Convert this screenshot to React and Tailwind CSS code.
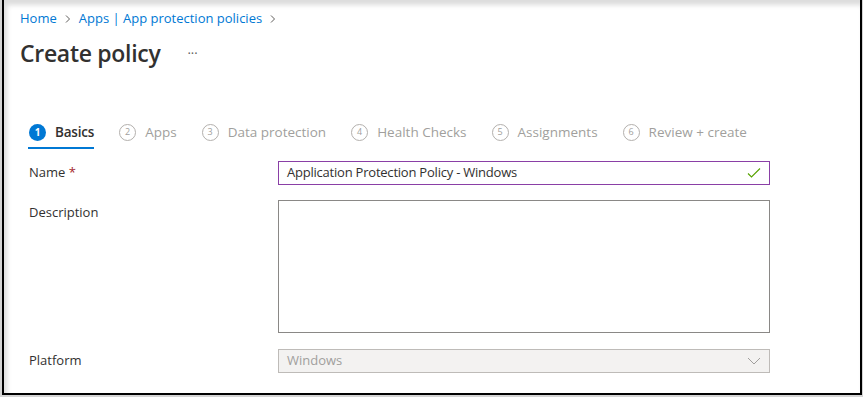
import React from 'react';

const font = { fontFamily: '"Open Sans", "Noto Sans", sans-serif' };

const steps = [
  { n: 1, label: 'Basics' },
  { n: 2, label: 'Apps' },
  { n: 3, label: 'Data protection' },
  { n: 4, label: 'Health Checks' },
  { n: 5, label: 'Assignments' },
  { n: 6, label: 'Review + create' },
];

const Chevron = () => (
  <svg width="8" height="10" viewBox="0 0 8 10" className="mx-[7px]">
    <path d="M2 1.5 L5.5 5 L2 8.5" fill="none" stroke="#605e5c" strokeWidth="1" />
  </svg>
);

const Step = ({ n, label, active }) => (
  <div className="flex flex-col">
    <div className="flex items-center h-[30px]">
      {active ? (
        <div className="w-[17px] h-[17px] rounded-full bg-[#0078d4] text-white text-[10px] font-bold flex items-center justify-center">
          {n}
        </div>
      ) : (
        <div className="w-[17px] h-[17px] rounded-full border border-[#b3b0ad] text-[#a19f9d] text-[9px] flex items-center justify-center">
          {n}
        </div>
      )}
      <span
        className={
          active
            ? 'ml-[9px] text-[13.5px] tracking-[-0.2px] font-semibold text-[#323130]'
            : 'ml-[9px] text-[13.5px] text-[#a19f9d]'
        }
      >
        {label}
      </span>
    </div>
    <div className={active ? 'h-[2px] bg-[#0078d4] -ml-[1px]' : 'h-[2px]'} />
  </div>
);

const App = () => {
  return (
    <div className="w-[863px] h-[397px] bg-[#d4d4d4] pl-[2px] pr-[1px] pb-[2px]" style={font}>
      <div className="h-full bg-white border-l-2 border-r-2 border-b-2 border-black shadow-[inset_3px_5px_5px_rgba(0,0,0,0.14)] pl-4 pt-[10px]">
        <div className="flex items-center h-[18px] text-[13px] text-[#0078d4]">
          <span>Home</span>
          <Chevron />
          <span>Apps | App protection policies</span>
          <Chevron />
        </div>

        <div className="flex items-center h-[32px] mt-[9px]">
          <h1 className="text-[23px] font-semibold text-[#323130] tracking-[-0.3px]">Create policy</h1>
          <span className="ml-[27px] text-[13px] text-[#605e5c] mt-[2px]">···</span>
        </div>

        <div className="flex gap-[25px] mt-[48px] ml-[9px]">
          {steps.map((s) => (
            <Step key={s.n} n={s.n} label={s.label} active={s.n === 1} />
          ))}
        </div>

        <div className="ml-[9px] mt-[12px] text-[13px] text-[#323130]">
          <div className="flex items-center">
            <div className="w-[249px]">
              Name <span className="text-[#a4262c]">*</span>
            </div>
            <div className="w-[492px] h-[24px] border border-[#8a3fa6] flex items-center justify-between px-[8px]">
              <span className="tracking-[-0.22px]">Application Protection Policy - Windows</span>
              <svg width="14" height="12" viewBox="0 0 14 12">
                <path d="M1 6.5 L4.5 10 L13 1.5" fill="none" stroke="#57a300" strokeWidth="1.1" />
              </svg>
            </div>
          </div>

          <div className="flex mt-[15px]">
            <div className="w-[249px] pt-[3px]">Description</div>
            <div className="w-[492px] h-[133px] border border-[#8a8886]" />
          </div>

          <div className="flex items-center mt-[16px]">
            <div className="w-[249px]">Platform</div>
            <div className="w-[492px] h-[24px] border border-[#bebbb8] bg-[#f3f2f1] flex items-center justify-between pl-[8px] pr-[8px]">
              <span className="text-[#a19f9d]">Windows</span>
              <svg width="14" height="8" viewBox="0 0 14 8">
                <path d="M1 1 L7 7 L13 1" fill="none" stroke="#a19f9d" strokeWidth="1" />
              </svg>
            </div>
          </div>
        </div>
      </div>
    </div>
  );
};

export default App;
